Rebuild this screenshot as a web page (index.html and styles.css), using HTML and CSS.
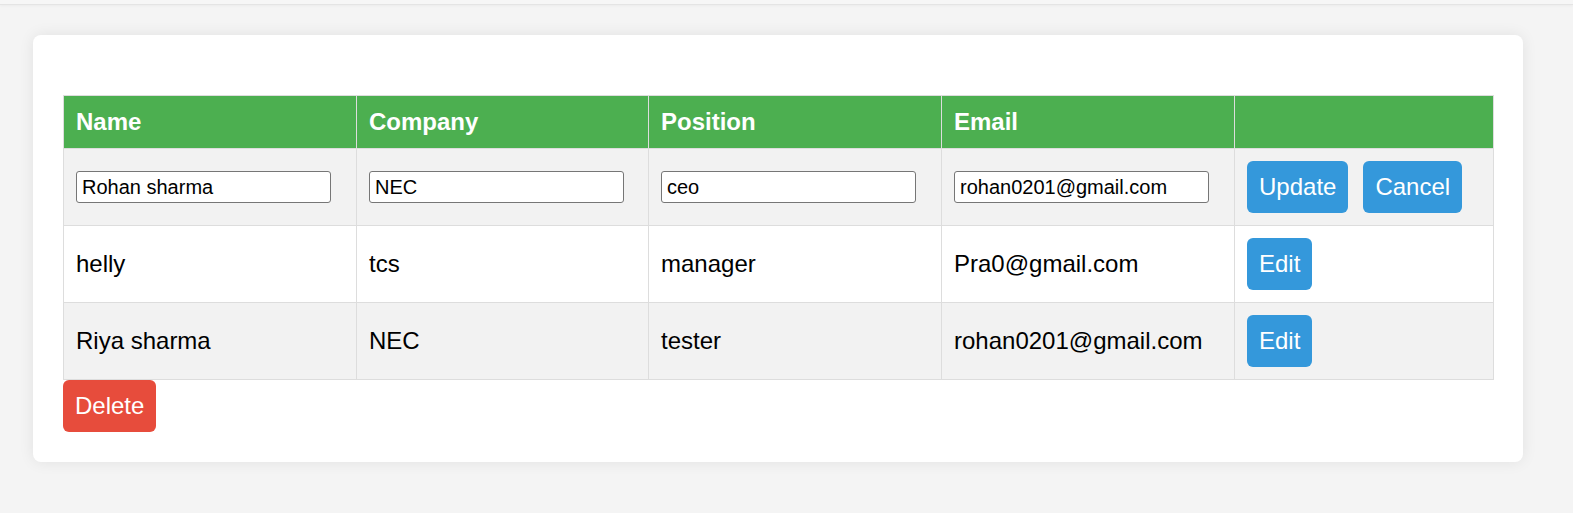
FILE: index.html
```html
<!DOCTYPE html>
<html>
<head>
<meta charset="utf-8">
<link rel="stylesheet" href="styles.css">
</head>
<body>
<div class="topbar"></div>
<div class="card">
  <table class="grid">
    <colgroup>
      <col class="c1"><col class="c2"><col class="c3"><col class="c4"><col class="c5">
    </colgroup>
    <thead>
      <tr><th>Name</th><th>Company</th><th>Position</th><th>Email</th><th></th></tr>
    </thead>
    <tbody>
      <tr class="alt">
        <td><input class="field" type="text" value="Rohan sharma"></td>
        <td><input class="field" type="text" value="NEC"></td>
        <td><input class="field" type="text" value="ceo"></td>
        <td><input class="field" type="text" value="rohan0201@gmail.com"></td>
        <td><button class="btn blue gap">Update</button><button class="btn blue">Cancel</button></td>
      </tr>
      <tr>
        <td>helly</td><td>tcs</td><td>manager</td><td>Pra0@gmail.com</td>
        <td><button class="btn blue">Edit</button></td>
      </tr>
      <tr class="alt">
        <td>Riya sharma</td><td>NEC</td><td>tester</td><td>rohan0201@gmail.com</td>
        <td><button class="btn blue">Edit</button></td>
      </tr>
    </tbody>
  </table>
  <button class="btn red">Delete</button>
</div>
</body>
</html>
```
FILE: styles.css
```css
html, body {
  margin: 0;
  padding: 0;
}
body {
  background: #f4f4f4;
  font-family: "Liberation Sans", Arial, sans-serif;
  color: #000;
  min-height: 513px;
}
.topbar {
  height: 4px;
  border-bottom: 1px solid #e4e4e4;
  box-shadow: 0 1px 3px rgba(0,0,0,0.04);
  background: #f6f6f6;
}
.card {
  margin: 30px 0 0 33px;
  width: 1490px;
  box-sizing: border-box;
  padding: 60px 30px 30px 30px;
  background: #fff;
  border-radius: 8px;
  box-shadow: 0 0 15px rgba(0,0,0,0.08);
}
.grid {
  width: 1430px;
  border-collapse: collapse;
  table-layout: fixed;
  font-size: 24px;
}
.c1, .c3, .c4 { width: 293px; }
.c2 { width: 292px; }
.c5 { width: 259px; }
.grid th, .grid td {
  border: 1px solid #ddd;
  padding: 12px;
  text-align: left;
  vertical-align: middle;
  line-height: 28px;
  white-space: nowrap;
}
.grid th {
  background: #4caf50;
  color: #fff;
  font-weight: bold;
}
.grid tr.alt td {
  background: #f2f2f2;
}
.field {
  box-sizing: border-box;
  width: 255px;
  height: 32px;
  font-family: "Liberation Sans", Arial, sans-serif;
  font-size: 20px;
  padding: 0 5px;
  border: 1px solid #767676;
  border-radius: 3px;
  background: #fff;
  color: #000;
  vertical-align: middle;
  margin: 0;
}
.btn {
  display: inline-block;
  border: none;
  color: #fff;
  font-family: "Liberation Sans", Arial, sans-serif;
  font-size: 24px;
  line-height: 28px;
  padding: 12px;
  border-radius: 6px;
  margin: 0;
  vertical-align: middle;
  cursor: pointer;
}
.blue { background: #3498db; }
.red { background: #e74c3c; display: block; }
.gap { margin-right: 15px; }
```
